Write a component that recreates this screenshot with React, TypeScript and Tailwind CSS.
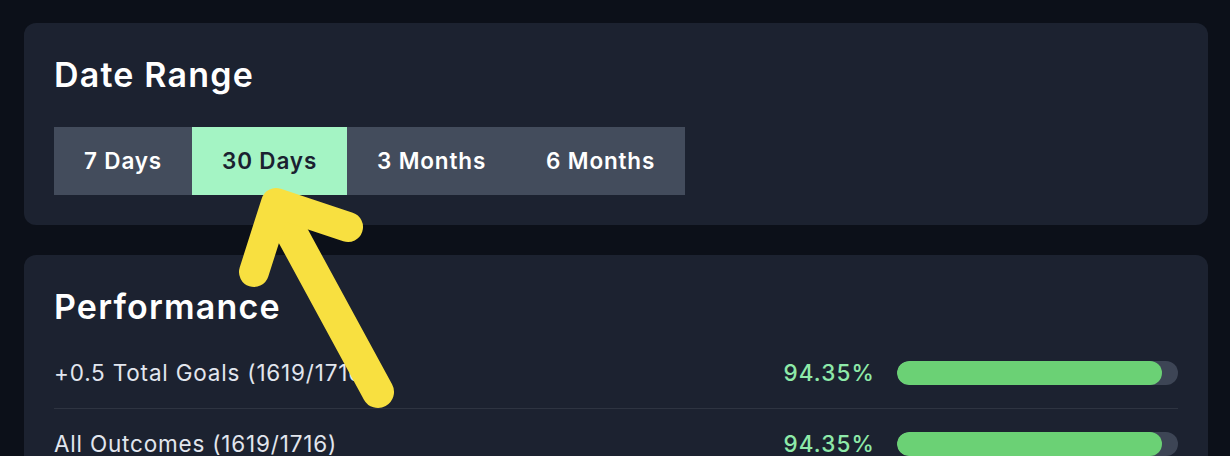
const ranges = ['7 Days', '30 Days', '3 Months', '6 Months']

const stats = [
  { label: '+0.5 Total Goals (1619/1716)', value: 94.35 },
  { label: 'All Outcomes (1619/1716)', value: 94.35 },
]

export default function App() {
  return (
    <div
      className="relative min-h-screen overflow-hidden bg-[#0c1019] pt-[23px] pr-[22px] pl-6"
      style={{ fontFamily: 'Inter, "Noto Sans", sans-serif' }}
    >
      <section className="rounded-xl bg-[#1c2230] px-[30px] pt-[32px] pb-[30px]">
        <h2 className="text-[34px] leading-[40px] font-semibold tracking-[0.035em] text-white">
          Date Range
        </h2>
        <div className="mt-[32px] flex">
          {ranges.map((range) => {
            const active = range === '30 Days'
            return (
              <button
                key={range}
                type="button"
                className={`h-[68px] px-[30px] text-[22.5px] font-semibold tracking-[0.037em] ${
                  active
                    ? 'bg-[#a4f4c4] text-[#1a2130]'
                    : 'bg-[#434c5c] text-white'
                }`}
              >
                {range}
              </button>
            )
          })}
        </div>
      </section>

      <section className="mt-[30px] rounded-xl bg-[#1c2230] px-[30px] pt-[32px] pb-[30px]">
        <h2 className="mb-[11px] text-[34px] leading-[40px] font-semibold tracking-[0.035em] text-white">
          Performance
        </h2>
        <div className="divide-y divide-[#2e3441]">
          {stats.map((stat) => (
            <div
              key={stat.label}
              className="flex items-center py-[19px] leading-[32px]"
            >
              <span className="flex-1 text-[22.5px] tracking-[0.036em] text-[#e2e6ee]">
                {stat.label}
              </span>
              <span className="mr-[22px] text-[22.5px] font-medium tracking-[0.05em] text-[#8eeaa9]">
                {stat.value.toFixed(2)}%
              </span>
              <div className="h-6 w-[281px] overflow-hidden rounded-full bg-[#3d4555]">
                <div
                  className="h-full rounded-full bg-[#6bd175]"
                  style={{ width: `${stat.value}%` }}
                />
              </div>
            </div>
          ))}
        </div>
      </section>

      <svg
        className="pointer-events-none absolute inset-0"
        width="1230"
        height="456"
        viewBox="0 0 1230 456"
      >
        <g
          fill="none"
          stroke="#f8e040"
          strokeLinecap="round"
          strokeLinejoin="round"
        >
          <path d="M378 392 L278 208" strokeWidth="32" />
          <path d="M254 272 L276 203 L348 227" strokeWidth="30" />
        </g>
      </svg>
    </div>
  )
}
